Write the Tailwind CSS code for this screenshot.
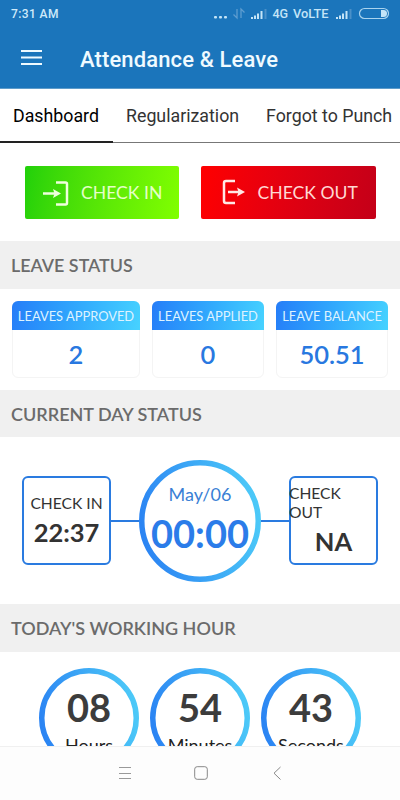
<!DOCTYPE html>
<html lang="en">
<head>
  <meta charset="UTF-8">
  <meta name="viewport" content="width=device-width, initial-scale=1.0">
  <title>Attendance &amp; Leave</title>
  <script src="https://cdn.jsdelivr.net/npm/@tailwindcss/browser@4"></script>
</head>
<body class="bg-white">
  <div class="flex flex-col w-[400px] h-[800px] overflow-hidden whitespace-nowrap font-['Lato',sans-serif]">

    <!-- Header -->
    <header class="h-[89px] shrink-0 bg-[#1b75bb] border-b border-[#5e9cca] font-['Roboto',sans-serif]">
      <div class="flex items-center justify-between h-7 pl-[11px] pr-[11px] text-[12px] font-medium text-[#cfeafa]">
        <span class="tracking-[0.4px]">7:31 AM</span>
        <svg class="w-[176px] h-7" viewBox="0 0 176 28" fill="#c4e4f7">
          <rect x="1" y="16" width="3" height="2.5" rx="1" />
          <rect x="6" y="16" width="3" height="2.5" rx="1" />
          <rect x="11" y="16" width="3" height="2.5" rx="1" />
          <path d="M24 9v9l-3.500-3.500M28 18V9l3.500 3.500" fill="none" stroke="#5e9dd0" stroke-width="1.300" />
          <path d="M38 17h2v2h-2zM41 15.500h2V19h-2zM44 13.500h2V19h-2zM47.500 11h2v8h-2z" />
          <path d="M51.500 9h2v10h-2z" fill="#4a90c8" />
          <text x="59.500" y="18" font-size="12.500" textLength="15.500">4G</text>
          <text x="80" y="18" font-size="12.500" textLength="35.500" lengthAdjust="spacingAndGlyphs">VoLTE</text>
          <path d="M123 17h2v2h-2zM126 15.500h2V19h-2zM129 13.500h2V19h-2zM132.500 11h2v8h-2z" />
          <path d="M136.500 9h2v10h-2z" fill="#4a90c8" />
          <rect x="146.500" y="8.500" width="29" height="10" rx="5" fill="none" stroke="#a9d3ee" stroke-width="1.200" />
          <path d="M168 10h2.500a3.500 3.500 0 0 1 0 7H168z" />
        </svg>
      </div>
      <div class="flex items-center h-[61px] pl-[21px] gap-[38px]">
        <svg class="w-[21px] h-4 -mt-[3px]" viewBox="0 0 21 16" stroke="#effaff" stroke-width="2">
          <path d="M0 2h21M0 8.500h21M0 15h21" />
        </svg>
        <h1 class="text-[22px] font-medium text-[#effaff]"><svg class="block w-[200px] h-7" viewBox="0 0 200 28" fill="currentColor"><text x="0" y="21.500" textLength="198">Attendance &amp; Leave</text></svg></h1>
      </div>
    </header>

    <!-- Tabs -->
    <nav class="flex h-[54px] shrink-0 font-['Roboto',sans-serif] text-[17.8px] text-[#333]">
      <div class="w-[113px] pl-[13px] leading-[54px] text-black border-b-2 border-[#222]">Dashboard</div>
      <div class="w-[140px] pl-[13px] leading-[54px] border-b border-[#777]">Regularization</div>
      <div class="w-[147px] pl-[13px] leading-[54px] border-b border-[#777]">Forgot to Punch</div>
    </nav>

    <!-- Buttons -->
    <div class="flex h-[98px] shrink-0 pt-[22.5px] pl-[24.5px] gap-[22px] text-[17.6px] text-white">
      <button class="flex items-center w-[154.5px] h-[53px] pl-[18px] gap-[12.5px] rounded-[2px] bg-linear-100 from-[#20d00a] to-[#80ff00]">
        <svg class="w-[26px] h-[26px] mt-[3px]" viewBox="0 0 26 26" fill="none" stroke="#efffdc" stroke-width="2.500">
          <path d="M13 1.500h9.500a1.500 1.500 0 0 1 1.500 1.500v19a1.500 1.500 0 0 1-1.500 1.500H13" />
          <path d="M0 12.500h12" />
          <path d="M10 8l8 4.500-8 4.500 1.500-4.500z" fill="#efffdc" stroke="none" />
        </svg>
        <span class="pt-[3px] text-[#e5ffc8]">CHECK IN</span>
      </button>
      <button class="flex items-center w-[175px] h-[53px] pl-[20.5px] gap-[12px] rounded-[2px] bg-linear-100 from-[#ff0000] to-[#c40018]">
        <svg class="w-[24px] h-[26px]" viewBox="0 0 24 26" fill="none" stroke="#ffe9e6" stroke-width="2.500">
          <path d="M13 2H4a2 2 0 0 0-2 2v18a2 2 0 0 0 2 2h9" />
          <path d="M6 13h12" />
          <path d="M15 8.500l8 4.500-8 4.500 1.500-4.500z" fill="#ffe9e6" stroke="none" />
        </svg>
        <span class="pt-[3px] text-[#ffd9d4]">CHECK OUT</span>
      </button>
    </div>

    <!-- Leave status -->
    <h2 class="h-12 shrink-0 pl-[11px] leading-[48px] bg-[#f0f0f0] text-[17.900px] font-semibold text-[#6b6b6b]">LEAVE STATUS</h2>
    <div class="flex h-[100.5px] shrink-0 pt-3 px-3 gap-3 text-center">
      <div class="w-[128px] h-[77px] rounded-md border border-[#f4f4f4]">
        <div class="-mx-px -mt-px h-[29px] leading-[30px] rounded-t-md bg-linear-100 from-[#267df8] to-[#47d2ff] text-[12.900px] text-[#def3ff]">LEAVES APPROVED</div>
        <div class="leading-[49px] text-[25.500px] font-semibold text-[#2878e0]">2</div>
      </div>
      <div class="w-[112px] h-[77px] rounded-md border border-[#f4f4f4]">
        <div class="-mx-px -mt-px h-[29px] leading-[30px] rounded-t-md bg-linear-100 from-[#267df8] to-[#47d2ff] text-[12.900px] text-[#def3ff]">LEAVES APPLIED</div>
        <div class="leading-[49px] text-[25.500px] font-semibold text-[#2878e0]">0</div>
      </div>
      <div class="w-[112px] h-[77px] rounded-md border border-[#f4f4f4]">
        <div class="-mx-px -mt-px h-[29px] leading-[30px] rounded-t-md bg-linear-100 from-[#267df8] to-[#47d2ff] text-[12.900px] text-[#def3ff]">LEAVE BALANCE</div>
        <div class="leading-[49px] text-[25.500px] font-semibold text-[#2878e0]">50.51</div>
      </div>
    </div>

    <!-- Current day status -->
    <h2 class="h-[47.5px] shrink-0 pl-[11px] leading-[48px] bg-[#f0f0f0] text-[18px] font-semibold text-[#6b6b6b]">CURRENT DAY STATUS</h2>
    <div class="flex items-center h-[167px] shrink-0 pl-[22px]">
      <div class="w-[89px] h-[89px] pt-[14px] rounded-[6px] border-2 border-[#2a7be0] text-center text-[#333]">
        <div class="text-[15.600px] leading-[22px]">CHECK IN</div>
        <div class="-mx-1 text-[25.500px] leading-[36px] font-bold">22:37</div>
      </div>
      <div class="w-7 h-[2px] bg-[#2a7be0]"></div>
      <div class="relative w-[122px] h-[122px] text-center">
        <svg class="absolute inset-0" viewBox="0 0 122 122" fill="none">
          <defs>
            <linearGradient id="ring" x1="0" y1="0.600" x2="1" y2="0.400">
              <stop offset="0" stop-color="#2b84f3" />
              <stop offset="1" stop-color="#4cc9f8" />
            </linearGradient>
          </defs>
          <circle cx="61" cy="61" r="58.250" stroke="url(#ring)" stroke-width="5.500" />
        </svg>
        <div class="relative pt-[22px] text-[18px] leading-6 text-[#3a7fd5]">May/06</div>
        <div class="relative text-[38px] leading-[55px] font-bold text-[#2b7ce9]">00:00</div>
      </div>
      <div class="w-7 h-[2px] bg-[#2a7be0]"></div>
      <div class="w-[89px] h-[89px] pt-[6px] rounded-[6px] border-2 border-[#2a7be0] text-[#333]">
        <div class="-ml-[2px] text-[15.600px] leading-[19px]">CHECK<br>OUT</div>
        <div class="text-center text-[25.500px] leading-[39px] font-bold">NA</div>
      </div>
    </div>

    <!-- Working hour -->
    <h2 class="h-[48px] shrink-0 pl-[11px] leading-[48px] bg-[#f0f0f0] text-[18px] font-semibold text-[#6b6b6b]">TODAY'S WORKING HOUR</h2>
    <div class="flex h-[94px] shrink-0 overflow-hidden pt-[16px] pl-[39px] gap-[11px] text-center">
      <div class="relative w-[100px] h-[100px]">
        <svg class="absolute inset-0" viewBox="0 0 100 100" fill="none"><circle cx="50" cy="50" r="47.250" stroke="url(#ring)" stroke-width="5.500" /></svg>
        <div class="relative pt-[11px] text-[38px] leading-[56px] font-bold text-[#3c3c3c]">08</div>
        <div class="relative text-[18px] leading-[21px] text-[#222]">Hours</div>
      </div>
      <div class="relative w-[100px] h-[100px]">
        <svg class="absolute inset-0" viewBox="0 0 100 100" fill="none"><circle cx="50" cy="50" r="47.250" stroke="url(#ring)" stroke-width="5.500" /></svg>
        <div class="relative pt-[11px] text-[38px] leading-[56px] font-bold text-[#3c3c3c]">54</div>
        <div class="relative text-[18px] leading-[21px] text-[#222]">Minutes</div>
      </div>
      <div class="relative w-[100px] h-[100px]">
        <svg class="absolute inset-0" viewBox="0 0 100 100" fill="none"><circle cx="50" cy="50" r="47.250" stroke="url(#ring)" stroke-width="5.500" /></svg>
        <div class="relative pt-[11px] text-[38px] leading-[56px] font-bold text-[#3c3c3c]">43</div>
        <div class="relative text-[18px] leading-[21px] text-[#222]">Seconds</div>
      </div>
    </div>

    <!-- System navigation -->
    <footer class="flex flex-1 items-center pl-[118px] pb-px gap-[62px] bg-[#fdfdfd] border-t border-[#f0f0f0]">
      <svg class="w-[14px] h-[14px]" viewBox="0 0 14 14" stroke="#999"><path d="M1 1.500h12M1 7.500h12M1 12.500h12" /></svg>
      <svg class="w-[14px] h-[14px]" viewBox="0 0 14 14" fill="none" stroke="#888"><rect x="0.700" y="0.700" width="12.600" height="12.600" rx="2.500" /></svg>
      <svg class="w-[14px] h-[14px]" viewBox="0 0 14 14" fill="none" stroke="#888"><path d="M10.500 1L4 7.200l6.500 6.300" /></svg>
    </footer>
  </div>
</body>
</html>
